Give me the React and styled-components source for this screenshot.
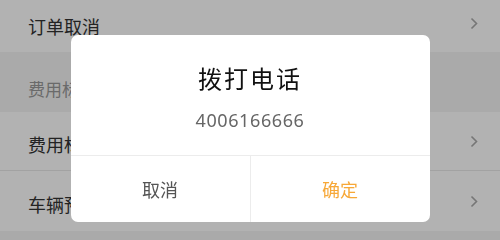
import React from 'react';
import styled, { createGlobalStyle } from 'styled-components';

const GlobalStyle = createGlobalStyle`
  html, body {
    margin: 0;
    padding: 0;
    width: 500px;
    height: 238px;
    overflow: hidden;
    background: #f4f4f4;
    font-family: "Noto Sans CJK SC", "Noto Sans", sans-serif;
  }
`;

const Page = styled.div`
  display: flex;
  flex-direction: column;
  width: 500px;
  height: 238px;
  background: #f4f4f4;
`;

const Row = styled.div`
  display: flex;
  align-items: center;
  justify-content: space-between;
  height: ${p => p.h || 59}px;
  padding: 0 22px 0 28px;
  background: #fff;
  border-bottom: ${p => (p.line ? '1px solid #e8e8e8' : 'none')};
  box-sizing: border-box;
`;

const RowLabel = styled.span`
  font-size: 18px;
  color: #333;
  padding-top: ${p => p.offset || 0}px;
`;

const SectionHeader = styled.div`
  display: flex;
  align-items: flex-end;
  height: 60px;
  padding: 0 28px 11px;
  box-sizing: border-box;
  font-size: 17px;
  color: #999;
  background: #f4f4f4;
`;

const Chevron = styled.svg`
  width: 8px;
  height: 13px;
  margin-top: ${p => p.shift || 0}px;
`;

const Mask = styled.div`
  position: fixed;
  inset: 0;
  background: rgba(0, 0, 0, 0.3);
  display: flex;
  justify-content: center;
  align-items: flex-start;
  padding-top: 35px;
`;

const Dialog = styled.div`
  width: 359px;
  height: 187px;
  background: #fff;
  border-radius: 7px;
  display: flex;
  flex-direction: column;
  overflow: hidden;
`;

const Body = styled.div`
  height: 121px;
  display: flex;
  flex-direction: column;
  align-items: center;
  border-bottom: 1px solid #ececec;
  box-sizing: border-box;
`;

const Title = styled.div`
  margin-top: 28px;
  font-size: 24px;
  line-height: 30px;
  letter-spacing: 2px;
  color: #111;
`;

const Phone = styled.div`
  margin-top: 15px;
  font-family: "Noto Sans", sans-serif;
  font-size: 18px;
  line-height: 24px;
  letter-spacing: 0.6px;
  color: #666;
`;

const Actions = styled.div`
  flex: 1;
  display: flex;
`;

const Action = styled.div`
  flex: 1;
  display: flex;
  align-items: center;
  justify-content: center;
  font-size: 18px;
  color: ${p => (p.primary ? '#f7a838' : '#555')};
  & + & {
    border-left: 1px solid #ececec;
  }
`;

const Arrow = ({ shift }) => (
  <Chevron viewBox="0 0 8 13" shift={shift}>
    <polyline points="1.5,1.5 6.5,6.5 1.5,11.5" fill="none" stroke="#aaa" strokeWidth="1.6" />
  </Chevron>
);

export default function App() {
  return (
    <>
      <GlobalStyle />
      <Page>
        <Row h={52}>
          <RowLabel>订单取消</RowLabel>
          <Arrow shift={-5} />
        </Row>
        <SectionHeader>费用标准</SectionHeader>
        <Row line>
          <RowLabel offset={6}>费用标准</RowLabel>
          <Arrow />
        </Row>
        <Row h={60}>
          <RowLabel offset={6}>车辆预约</RowLabel>
          <Arrow />
        </Row>
      </Page>
      <Mask>
        <Dialog>
          <Body>
            <Title>拨打电话</Title>
            <Phone>4006166666</Phone>
          </Body>
          <Actions>
            <Action>取消</Action>
            <Action primary>确定</Action>
          </Actions>
        </Dialog>
      </Mask>
    </>
  );
}
